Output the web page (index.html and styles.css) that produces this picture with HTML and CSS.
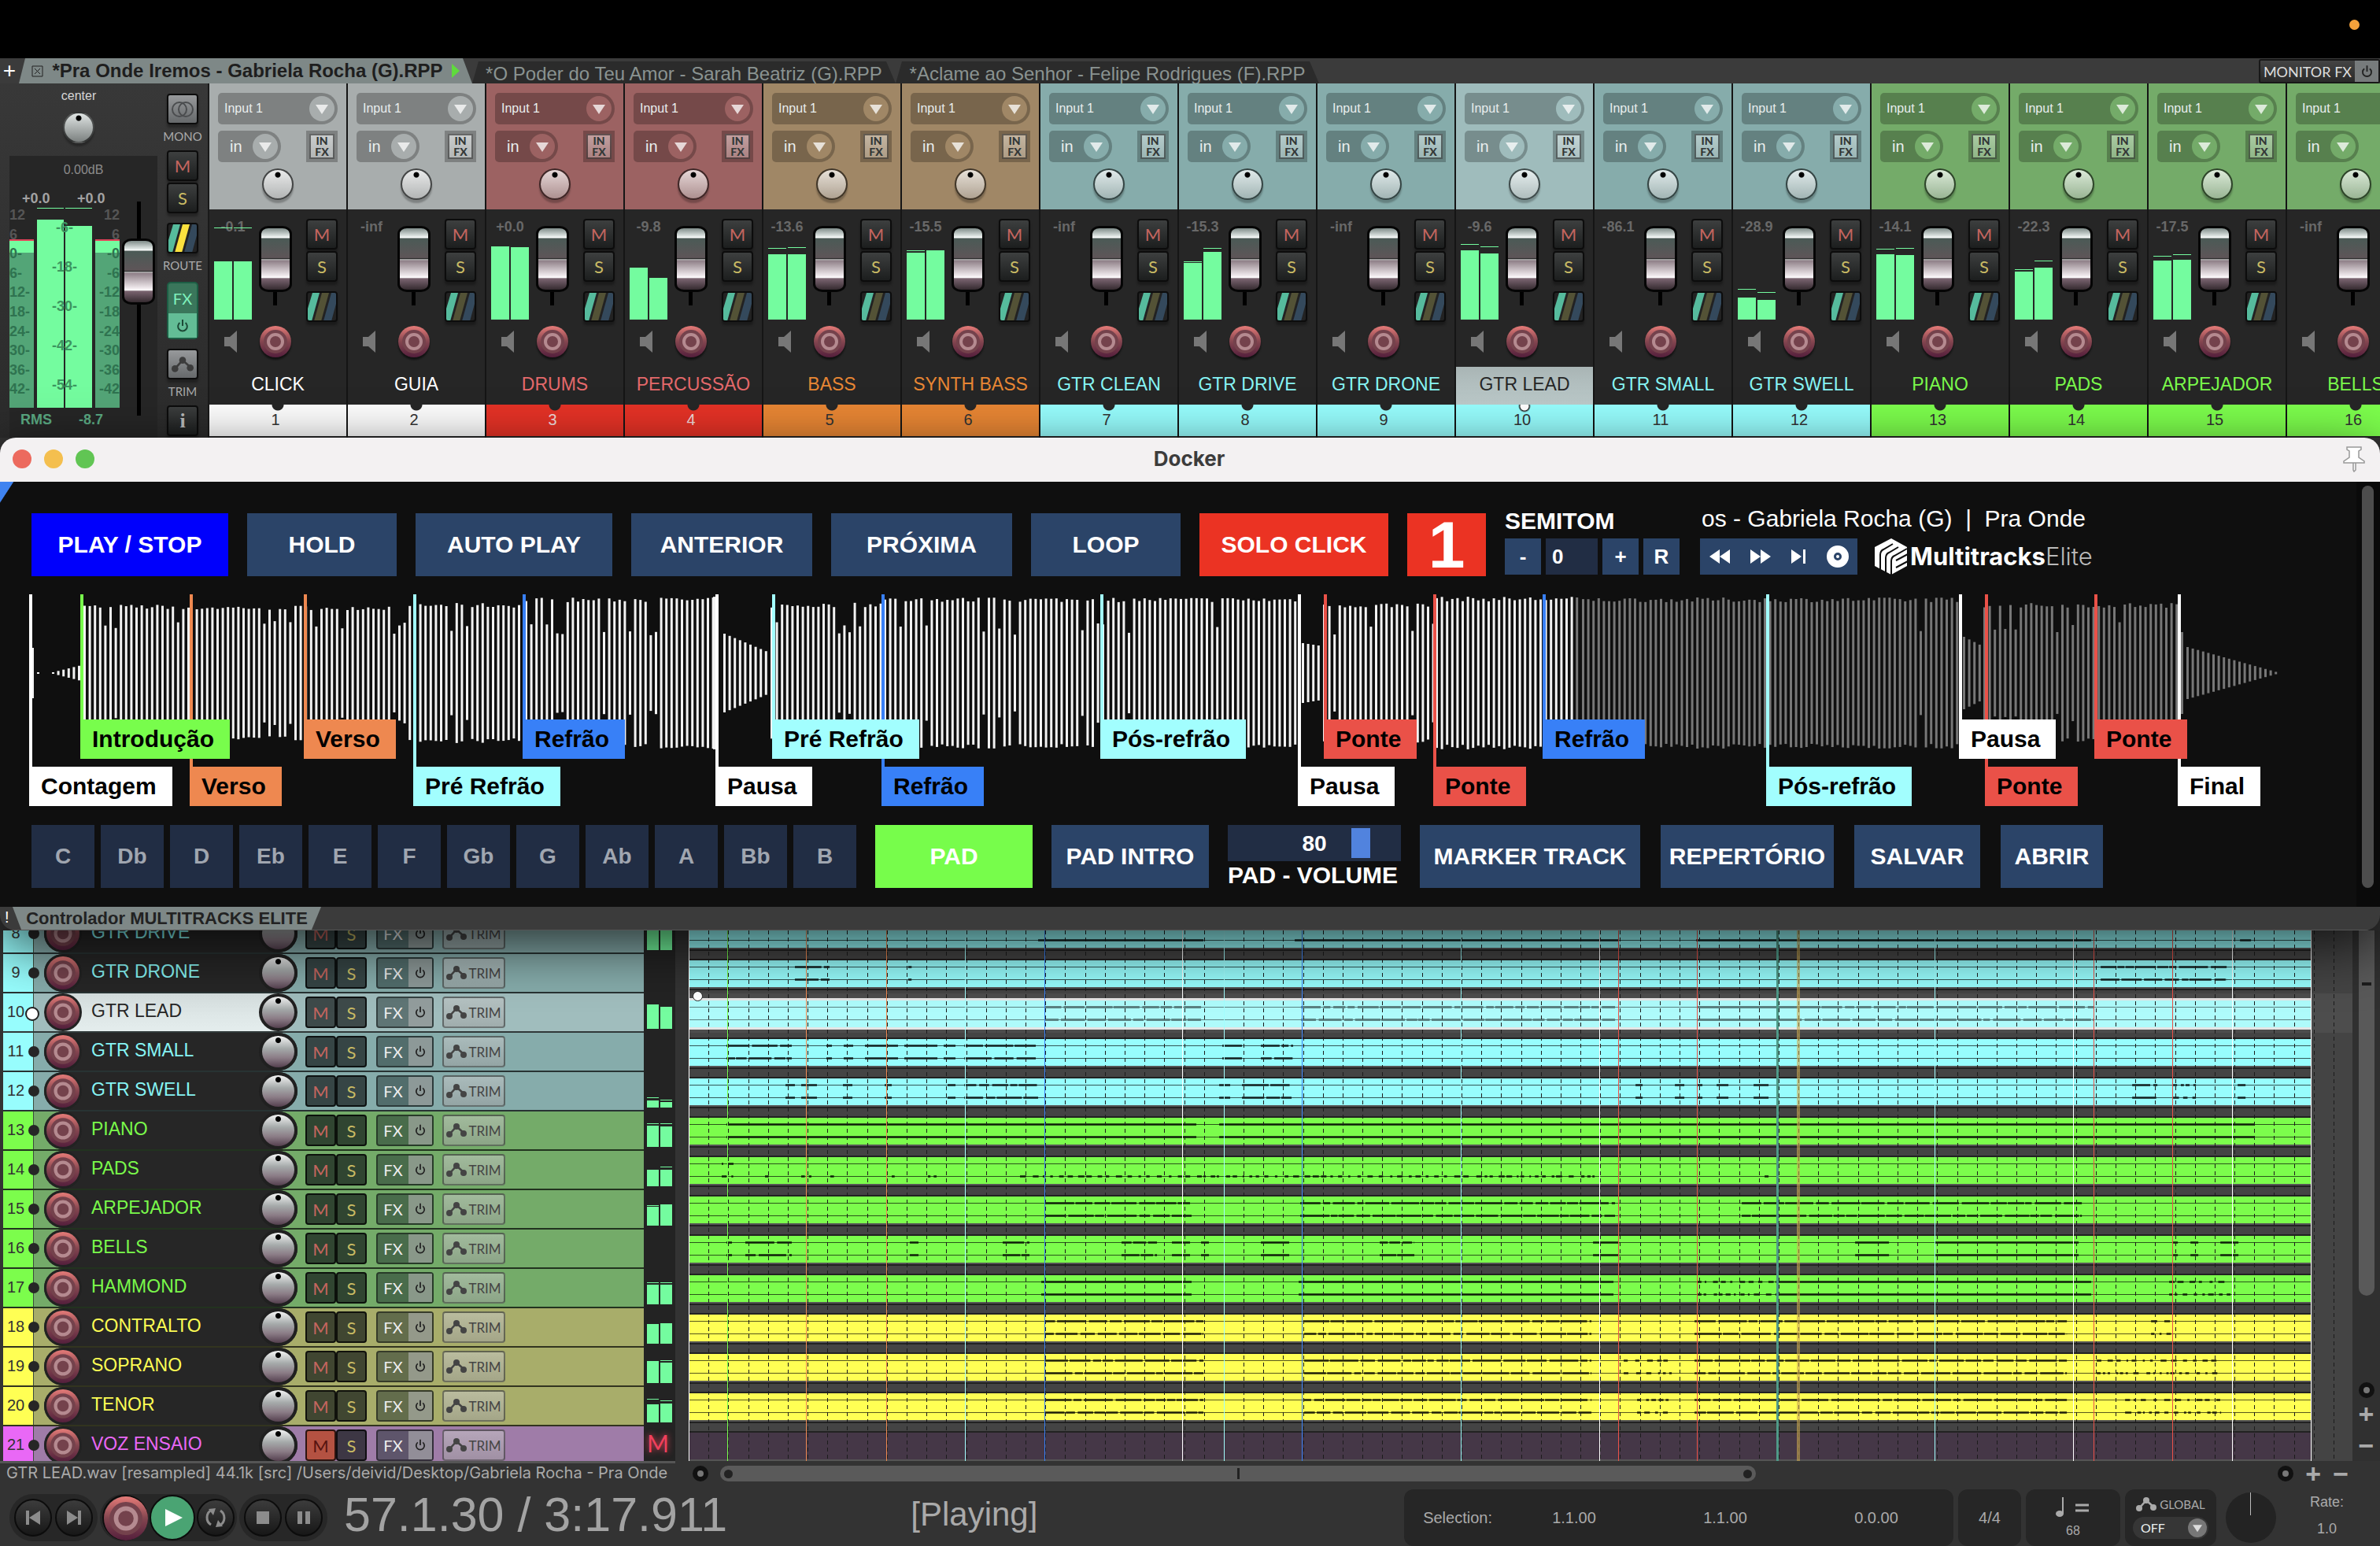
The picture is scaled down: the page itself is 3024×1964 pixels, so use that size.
FILE: index.html
```html
<!DOCTYPE html>
<html lang="pt-BR">
<head>
  <meta charset="UTF-8">
  <title>Pra Onde Iremos - Gabriela Rocha (G).RPP</title>
  <link rel="stylesheet" href="styles.css">
</head>
<body>
  <!-- shared icons -->
  <svg class="defs" aria-hidden="true">
    <symbol id="i-down" viewBox="0 0 32 32"><circle cx="16" cy="16" r="16" fill="var(--soft)"/><path d="M8 11h16l-8 12z" fill="#fff" opacity=".75"/></symbol>
    <symbol id="i-power" viewBox="0 0 20 20"><path d="M6 5.5a6.5 6.5 0 1 0 8 0M10 1v9" fill="none" stroke="currentColor" stroke-width="2.2"/></symbol>
    <symbol id="i-env" viewBox="0 0 26 20"><path d="M4 15 13 5l9 8" fill="none" stroke="currentColor" stroke-width="2.5"/><circle cx="4" cy="15" r="4" fill="currentColor"/><circle cx="13" cy="5" r="4" fill="currentColor"/><circle cx="22" cy="14" r="4" fill="currentColor"/></symbol>
    <symbol id="i-route" viewBox="0 0 36 36"><path d="M6 0h9L5 36H0V20z" fill="#56bb9d"/><path d="M18 0h9L17 36H8z" fill="var(--mid)"/><path d="M30 0h6v14l-6 22H20z" fill="#34495c"/></symbol>
    <symbol id="i-spk" viewBox="0 0 16 28"><path d="M0 8h7l9-8v28l-9-8H0z" fill="#777"/></symbol>
    <symbol id="i-rec" viewBox="0 0 40 40">
      <circle cx="20" cy="20" r="20" fill="url(#recg)"/><circle cx="20" cy="20" r="15" fill="#74424c"/><circle cx="20" cy="20" r="9" fill="none" stroke="#b58a90" stroke-width="4"/>
    </symbol>
    <linearGradient id="recg" x1="0" y1="0" x2="0" y2="1"><stop offset="0" stop-color="#e67b78"/><stop offset=".5" stop-color="#83454f"/><stop offset="1" stop-color="#541f3c"/></linearGradient>
  </svg>

  <header class="menubar"><span class="mic-dot"></span></header>

  <nav class="tabs">
    <button class="tab-add" aria-label="New tab">+</button>
    <button class="tab active">
      <svg width="15" height="15" viewBox="0 0 15 15"><path d="M1 1h13v13H1zM4 4l7 7M11 4l-7 7" fill="none" stroke="#222"/></svg>
      <span>*Pra Onde Iremos - Gabriela Rocha (G).RPP</span>
      <svg width="10" height="18" viewBox="0 0 10 18"><path d="M0 0v18l10-9z" fill="#5fdb3c"/></svg>
    </button>
    <button class="tab">*O Poder do Teu Amor - Sarah Beatriz (G).RPP</button>
    <button class="tab">*Aclame ao Senhor - Felipe Rodrigues (F).RPP</button>
    <button class="monitor-fx"><span>MONITOR FX</span><i><svg width="17" height="20"><use href="#i-power"/></svg></i></button>
  </nav>

  <section class="mixer">
    <div class="master">
      <div class="master-left">
        <div class="pan-label">center</div>
        <span class="knob"></span>
        <div class="master-box">
          <div class="master-db">0.00dB</div>
          <div class="master-meter" id="masterMeter"></div>
          <input class="fader master-fader" type="range" min="0" max="100" value="75" aria-label="Master volume">
        </div>
      </div>
      <div class="master-btns">
        <button class="sq light" aria-label="Mono"><svg width="30" height="22" viewBox="0 0 30 22"><circle cx="11" cy="11" r="9" fill="none" stroke="#4b4d4f" stroke-width="2"/><circle cx="19" cy="11" r="9" fill="none" stroke="#4b4d4f" stroke-width="2"/></svg></button>
        <span class="cap">MONO</span>
        <button class="sq mute">M</button>
        <button class="sq solo">S</button>
        <button class="sq route on" aria-label="Route"><svg width="36" height="36"><use href="#i-route"/></svg></button>
        <span class="cap">ROUTE</span>
        <button class="master-fx"><span>FX</span><i><svg width="18" height="20"><use href="#i-power"/></svg></i></button>
        <button class="sq light" aria-label="Trim"><svg width="28" height="22"><use href="#i-env"/></svg></button>
        <span class="cap">TRIM</span>
        <button class="sq info">i</button>
      </div>
    </div>
    <div class="strips" id="strips"></div>
  </section>

  <section class="docker">
    <div class="titlebar">
      <div class="lights"><button class="close" aria-label="Close"></button><button class="min" aria-label="Minimize"></button><button class="max" aria-label="Zoom"></button></div>
      <h1>Docker</h1>
      <svg class="pin" width="30" height="34" viewBox="0 0 30 34"><path d="M6 2h18v3l-3 2v8l7 5v2H2v-2l7-5V7L6 5zM14 22h3v9l-2 2-1-2z" fill="#fff" stroke="#999" stroke-width="1.5"/></svg>
    </div>
    <div class="docker-body">
      <div class="docker-main">
        <div class="row top-row">
          <button class="btn w250 blue">PLAY / STOP</button>
          <button class="btn w190">HOLD</button>
          <button class="btn w250">AUTO PLAY</button>
          <button class="btn w230">ANTERIOR</button>
          <button class="btn w230">PRÓXIMA</button>
          <button class="btn w190">LOOP</button>
          <button class="btn w240 red">SOLO CLICK</button>
          <button class="btn w100 red big">1</button>
          <div class="semitom">
            <label for="semi">SEMITOM</label>
            <div class="semi-row">
              <button class="btn small">-</button>
              <input id="semi" type="text" value="0">
              <button class="btn small">+</button>
              <button class="btn small">R</button>
            </div>
          </div>
          <div class="now">
            <div class="marquee"><span>os - Gabriela Rocha (G)  |  Pra Onde</span></div>
            <div class="now-row">
              <div class="mini-transport">
                <button aria-label="Rewind"><svg width="26" height="18" viewBox="0 0 26 18"><path d="M13 0v18L0 9zM26 0v18L13 9z" fill="#fff"/></svg></button>
                <button aria-label="Forward"><svg width="26" height="18" viewBox="0 0 26 18"><path d="M0 0v18l13-9zM13 0v18l13-9z" fill="#fff"/></svg></button>
                <button aria-label="Next"><svg width="18" height="18" viewBox="0 0 18 18"><path d="M0 0v18l13-9zM15 0h3v18h-3z" fill="#fff"/></svg></button>
                <button aria-label="Disc"><svg width="30" height="30" viewBox="0 0 30 30"><circle cx="15" cy="15" r="9.5" fill="none" stroke="#fff" stroke-width="9"/><circle cx="15" cy="15" r="2" fill="#fff"/></svg></button>
              </div>
              <div class="logo">
                <svg width="42" height="46" viewBox="0 0 42 46"><path d="M21 0 41 11v24L21 46 0 35V11z" fill="#fff"/><path d="M7 39V21q0-5 4-7l12-7M14 43V25q0-5 4-7l12-7M21 46V29q0-5 4-7l16-9M27 28l15-8M27 37l15-8" fill="none" stroke="#0f0f0f" stroke-width="2"/></svg>
                <span><b>Multitracks</b>Elite</span>
              </div>
            </div>
          </div>
        </div>

        <div class="song" id="song"></div>

        <div class="row keys-row">
          <div class="keys" id="keys"></div>
          <button class="btn w200 green">PAD</button>
          <button class="btn w200">PAD INTRO</button>
          <div class="pad-vol">
            <div class="vol-box"><input id="padvol" type="range" min="0" max="100" value="80"><output for="padvol">80</output></div>
            <label for="padvol">PAD - VOLUME</label>
          </div>
          <div class="files">
            <button class="btn w280">MARKER TRACK</button>
            <button class="btn w220">REPERTÓRIO</button>
            <button class="btn w160">SALVAR</button>
            <button class="btn w130">ABRIR</button>
          </div>
        </div>
      </div>
      <div class="vscroll"><span></span></div>
    </div>
    <div class="dock-tabs"><span class="bang">!</span><button class="dock-tab">Controlador MULTITRACKS ELITE</button></div>
  </section>

  <main class="arrange">
    <div class="tcp" id="tcp"></div>
    <div class="timeline">
      <div id="lanes"></div>
      <svg class="grid" id="grid"></svg>
      <span class="handle"></span>
    </div>
    <div class="arr-scroll"><span class="thumb"></span><span class="round"></span><b>+</b><b>−</b></div>
  </main>

  <div class="status">
    <div class="file-info">GTR LEAD.wav [resampled] 44.1k [src] /Users/deivid/Desktop/Gabriela Rocha - Pra Onde</div>
    <div class="hscroll">
      <span class="round"></span>
      <div class="htrack"><span class="hthumb"><i></i><u></u><i></i></span></div>
      <span class="round"></span><b>+</b><b>−</b>
    </div>
  </div>

  <footer class="transport">
    <div class="tgroup">
      <button class="tb" aria-label="Start"><svg width="18" height="18" viewBox="0 0 18 18"><path d="M0 0h4v18H0zM18 0v18L4 9z"/></svg></button>
      <button class="tb" aria-label="End"><svg width="18" height="18" viewBox="0 0 18 18"><path d="M14 0h4v18h-4zM0 0v18l14-9z"/></svg></button>
    </div>
    <div class="tgroup tight">
      <button class="tb rec" aria-label="Record"><svg width="56" height="56" viewBox="0 0 40 40"><use href="#i-rec"/></svg></button>
      <button class="tb play" aria-label="Play"><svg width="22" height="22" viewBox="0 0 22 22"><path d="M0 0v22l22-11z" fill="#fff"/></svg></button>
      <button class="tb" aria-label="Loop"><svg width="28" height="28" viewBox="0 0 28 28"><path d="M9 4a11 11 0 0 0-1 19M19 24a11 11 0 0 0 1-19" fill="none" stroke="#8c8c8c" stroke-width="3"/><path d="M5 3l9-1-3 9zM23 25l-9 1 3-9z"/></svg></button>
    </div>
    <div class="tgroup">
      <button class="tb" aria-label="Stop"><svg width="16" height="16" viewBox="0 0 16 16"><path d="M0 0h16v16H0z"/></svg></button>
      <button class="tb" aria-label="Pause"><svg width="16" height="16" viewBox="0 0 16 16"><path d="M0 0h6v16H0zM10 0h6v16h-6z"/></svg></button>
    </div>
    <div class="clock">57.1.30 / 3:17.911</div>
    <div class="state">[Playing]</div>
    <div class="panel sel"><span>Selection:</span><span>1.1.00</span><span>1.1.00</span><span>0.0.00</span></div>
    <div class="panel sig">4/4</div>
    <div class="panel tempo">
      <svg width="44" height="26" viewBox="0 0 44 26"><ellipse cx="5" cy="21" rx="5" ry="4" fill="#aaa"/><path d="M9 0v21" stroke="#aaa" stroke-width="2"/><path d="M25 10h17M25 17h17" stroke="#aaa" stroke-width="3"/></svg>
      <span>68</span>
    </div>
    <div class="panel global">
      <div><svg width="26" height="20"><use href="#i-env"/></svg>GLOBAL</div>
      <label class="pill"><select aria-label="Global automation"><option>OFF</option></select><svg width="24" height="24"><use href="#i-down"/></svg></label>
    </div>
    <div class="rate-knob"></div>
    <div class="rate"><span>Rate:</span><span>1.0</span></div>
  </footer>

  <script src="script.js"></script>
</body>
</html>
```
FILE: styles.css
```css
* {
  box-sizing: border-box;
}
body {
  margin: 0;
  min-height: 100vh;
  display: flex;
  flex-direction: column;
  overflow: hidden;
  background: #333;
  color: #aaa;
  font-family: "Liberation Sans", Arial, sans-serif;
  font-size: 20px;
}
button, input, select {
  font: inherit;
  color: inherit;
  border: 0;
  margin: 0;
  padding: 0;
  background: none;
}
svg {
  display: block;
}
.defs {
  position: absolute;
  width: 0;
  height: 0;
}

/* top */
.menubar {
  height: 74px;
  background: #000;
  display: flex;
  justify-content: flex-end;
  padding: 25px 26px 0 0;
}
.mic-dot {
  width: 13px;
  height: 13px;
  border-radius: 50%;
  background: #f5a23b;
}
.tabs {
  height: 32px;
  background: #3b3b3b;
  display: flex;
  align-items: flex-end;
  font-size: 24px;
}
.tab-add {
  width: 24px;
  height: 32px;
  color: #fff;
  font-size: 28px;
  line-height: 26px;
}
.tab {
  height: 28px;
  line-height: 32px;
  width: 538px;
  background: #2b2b2b;
  color: #8a9391;
  clip-path: polygon(8px 0, calc(100% - 12px) 0, 100% 100%, 0 100%);
  white-space: nowrap;
}
.tab.active {
  width: 576px;
  height: 32px;
  line-height: 30px;
  background: #7e8887;
  color: #1e1e1e;
  font-weight: bold;
  display: flex;
  align-items: center;
  justify-content: center;
  gap: 11px;
}
.monitor-fx {
  margin-left: auto;
  height: 31px;
  display: flex;
  align-items: center;
  background: linear-gradient(#444, #2a2a2a);
  border: 2px solid #181818;
  border-radius: 3px;
  color: #ddd;
  font-family: Lato, sans-serif;
  font-size: 18px;
}
.monitor-fx span {
  padding: 0 4px;
}
.monitor-fx i {
  width: 30px;
  height: 27px;
  background: #777b7c;
  color: #222;
  display: grid;
  place-items: center;
}

/* mixer */
.mixer {
  height: 450px;
  display: flex;
  overflow: hidden;
  background: #262626;
}
.master {
  flex: 0 0 266px;
  display: flex;
  background: linear-gradient(#383838, #303030 60%, #2b2b2b);
  border-right: 2px solid #1a1a1a;
}
.master-left {
  width: 200px;
  padding: 6px 0 0 12px;
  display: flex;
  flex-direction: column;
}
.pan-label {
  height: 20px;
  margin-bottom: 10px;
  padding-right: 12px;
  font-size: 16px;
  line-height: 20px;
  color: #d6d6d6;
  text-align: center;
}
.knob {
  display: block;
  flex: none;
  width: 40px;
  height: 40px;
  border-radius: 50%;
  border: 2px solid rgba(0,0,0,.6);
  background: radial-gradient(circle at 50% 17%, #000 3px, transparent 4px), linear-gradient(rgba(255,255,255,.75), rgba(190,190,190,.5));
  background-clip: padding-box;
  box-shadow: 0 4px 2px rgba(0,0,0,.25);
}
.master-left .knob {
  margin: 0 0 16px 68px;
  background: radial-gradient(circle at 50% 17%, #000 3px, transparent 4px), linear-gradient(#e0e5e4, #7c8180);
}
.master-box {
  flex: 1;
  background: #262626;
  display: grid;
  grid-template: 37px 1fr / 140px 1fr;
}
.master-db {
  grid-column: 1 / 3;
  text-align: center;
  font-size: 16px;
  line-height: 36px;
  color: #8b8b8b;
}
.master-meter {
  position: relative;
  font-size: 18px;
  font-weight: bold;
  color: #555;
}
/* meter scale is drawn over the bars */
.master-meter span {
  position: absolute;
  line-height: 18px;
}
.master-meter .ml { left: 0; }
.master-meter .mr { right: 0; }
.master-meter .mc { left: 0; width: 100%; text-align: center; color: #3c9460; }
.master-meter .on { color: #2f7350; }
.master-meter .bar {
  bottom: 38px;
  width: 34px;
  background: #74fc9f;
}
.master-meter .side {
  width: 31px;
  height: 214px;
  border-top: 2px solid #e3445a;
  background: linear-gradient(#74fc9f 15px, #53a577 15px);
}
.master-meter .peak { color: #a2a2a2; }
.master-meter .rms { color: #5aa982; }
.fader {
  appearance: none;
  writing-mode: vertical-lr;
  direction: rtl;
  width: 42px;
  height: 101px;
  background: linear-gradient(#000, #000) center / 5px 100% no-repeat;
}
.fader::-webkit-slider-thumb {
  appearance: none;
  width: 42px;
  height: 84px;
  border: 3px solid #050505;
  border-radius: 12px / 10px;
  background: linear-gradient(#7f8c89, #e9efed 14%, #fff 15%, #4b5a56 17%, #5e5558 48%, #111 49%, #bbb 51%, #8f8088 53%, #f4eef1 78%, #fff 80%, #7a6470 82%, #352b30);
}
.master-fader {
  height: 272px;
  margin: 21px 0 0 3px;
}
.master-btns {
  flex: 1;
  display: flex;
  flex-direction: column;
  align-items: center;
  padding-top: 13px;
}
.sq {
  --mid: #535236;
  flex: none;
  width: 40px;
  height: 39px;
  border: 2px solid #0c0c0c;
  border-radius: 4px;
  background: linear-gradient(#3d3f3f, #1c1e1e);
  display: grid;
  place-items: center;
  overflow: hidden;
  font-family: Lato, sans-serif;
  font-size: 22px;
  line-height: 32px;
  box-shadow: 0 4px 3px rgba(0,0,0,.3);
}
.sq + .sq {
  margin-top: 2px;
}
.mute { color: #c4655f; }
.solo { color: #c9bb64; }
.sq.light { background: linear-gradient(#97999b, #66696b); color: #3c3c3c; }
.sq.route { margin-top: 12px; background: #222; }
.sq.route.on { --mid: #fbe13e; }
.sq.info { font-family: "Liberation Serif", serif; font-weight: bold; font-size: 26px; color: #bbb; }
.cap {
  height: 33px;
  line-height: 31px;
  font-family: Lato, sans-serif;
  font-size: 15px;
  color: #aaa;
}
.sq.route + .cap { height: 36px; }
.master-fx {
  width: 40px;
  height: 73px;
  margin-bottom: 12px;
  border: 2px solid #1d5e45;
  border-radius: 5px;
  background: #3a765b;
  color: #7ff0bb;
  font-family: Lato, sans-serif;
  display: grid;
  grid-template-rows: 38px 1fr;
}
.master-fx span { line-height: 38px; }
.master-fx i {
  background: #63bd96;
  color: #1c4936;
  display: grid;
  place-items: center;
}

.strips {
  flex: 1;
  display: flex;
  overflow: hidden;
}
.strip {
  flex: 0 0 176px;
  border-right: 2px solid #151515;
}
.strip-io {
  height: 160px;
  padding: 12px 11px 0;
  background: var(--soft);
}
.strip.selected { --soft: #9fbcbc; }
.pill {
  position: relative;
  display: flex;
  align-items: center;
  justify-content: space-between;
  height: 40px;
  padding: 0 4px 0 8px;
  border-radius: 5px 20px 20px 5px;
  background: rgba(0,0,0,.25);
  color: #e9eeee;
  font-size: 16px;
}
.pill select {
  appearance: none;
  flex: 1;
  min-width: 0;
  line-height: 30px;
}
.io-row {
  display: flex;
  justify-content: space-between;
  margin: 8px 0;
}
.io-row .pill {
  width: 80px;
  padding-left: 15px;
  font-size: 20px;
}
.infx {
  width: 40px;
  height: 40px;
  border: 4px solid rgba(0,0,0,.25);
  background: linear-gradient(rgba(255,255,255,.4), rgba(200,200,200,.3));
  background-clip: padding-box;
  box-shadow: inset 0 0 0 2px rgba(0,0,0,.5);
  color: #333737;
  font: 900 14px/14px Lato, sans-serif;
}
.strip-io .knob {
  margin: 0 auto;
}
.strip-mid {
  height: 200px;
  display: grid;
  grid-template-columns: 48px 1fr 40px;
  padding: 12px 11px 0 6px;
}
.strip-meter {
  display: flex;
  flex-direction: column;
}
.db {
  height: 20px;
  line-height: 20px;
  font-size: 18px;
  font-weight: bold;
  color: #686868;
  text-align: center;
}
.bars {
  position: relative;
  height: 108px;
  display: flex;
  align-items: flex-end;
  gap: 2px;
  margin-bottom: 14px;
}
.bars i {
  flex: 1;
  background: #74fc9f;
}
/* peak hold line floats over the bar */
.bars u {
  position: absolute;
  height: 1px;
  width: 23px;
  background: #74fc9f;
}
.bars u + u { right: 0; }
.strip-meter svg { margin-left: 13px; }
.strip-fader {
  display: flex;
  flex-direction: column;
  align-items: center;
  padding: 9px 10px 0 0;
}
.strip-fader .fader { margin-bottom: 26px; }
.recbtn { filter: drop-shadow(0 3px 1px #111); }
.strip-name {
  height: 48px;
  line-height: 44px;
  text-align: center;
  font-size: 23px;
  white-space: nowrap;
  color: var(--text);
}
.selected .strip-name { background: linear-gradient(#a9b5b5, #bccaca); color: #262626; }
.strip-num {
  height: 40px;
  line-height: 38px;
  padding-right: 6px;
  text-align: center;
  background: radial-gradient(circle at 50% 0, #262626 7px, transparent 8px), var(--hot);
  color: var(--num, #333);
}
.selected .strip-num { background: radial-gradient(circle at 50% 2px, #fff 5px, #222 6px, transparent 8px), var(--hot); }

/* docker window */
.docker {
  position: relative;
  z-index: 2;
  background: #3b3b3b;
  border-radius: 20px;
  overflow: hidden;
  flex: none;
  box-shadow: 0 20px 70px rgba(0,0,0,.7);
}
.titlebar {
  height: 56px;
  display: grid;
  grid-template-columns: 1fr auto 1fr;
  align-items: center;
  padding: 0 18px 2px 16px;
  background: #f3f1f2;
}
.titlebar h1 {
  margin: 0;
  font: bold 26px/30px Inter, sans-serif;
  color: #3c3c3c;
}
.lights { display: flex; gap: 16px; }
.lights button { width: 24px; height: 24px; border-radius: 50%; }
.close { background: #ec6a5e; }
.min { background: #f4bf4f; }
.max { background: #61c554; }
.pin { justify-self: end; }
.docker-body {
  display: flex;
  background: linear-gradient(123deg, #3f83f0 14px, transparent 15px), #0f0f0f;
}
.docker-main {
  flex: 1;
  min-width: 0;
  padding: 40px 0 24px;
  color: #fff;
  font-size: 30px;
}
.row {
  display: flex;
  gap: 24px;
  height: 80px;
  padding-left: 40px;
}
.btn {
  background: #2b4468;
  font-weight: bold;
  white-space: nowrap;
}
.btn.blue { background: #0000fc; }
.btn.red { background: #eb3323; }
.btn.green { background: #77fd4b; }
.btn.big { font-size: 84px; line-height: 78px; }
.w100 { width: 100px; }
.w130 { width: 130px; }
.w160 { width: 160px; }
.w190 { width: 190px; }
.w200 { width: 200px; }
.w220 { width: 220px; }
.w230 { width: 230px; }
.w240 { width: 240px; }
.w250 { width: 250px; }
.w280 { width: 280px; }
.semitom {
  width: 224px;
  font-weight: bold;
  line-height: 20px;
}
.semitom label { display: block; height: 32px; }
.semi-row { display: flex; gap: 6px; font-size: 26px; }
.semi-row .btn { width: 46px; height: 46px; }
.semi-row input { width: 66px; height: 46px; padding-left: 8px; background: #212d44; }
.now { width: 520px; }
.marquee {
  display: flex;
  justify-content: flex-end;
  width: 490px;
  height: 38px;
  margin: -10px 0 4px;
  overflow: hidden;
  white-space: pre;
  line-height: 34px;
}
.now-row { display: flex; gap: 22px; }
.mini-transport {
  display: flex;
  align-items: center;
  justify-content: space-between;
  width: 200px;
  height: 46px;
  padding: 0 10px 0 12px;
  background: #2b4468;
}
.logo {
  display: flex;
  align-items: center;
  gap: 3px;
  font: 300 31px/40px Inter, sans-serif;
  color: #bbb;
}
.logo b { color: #fff; font-weight: 700; }

.song {
  position: relative;
  height: 269px;
  margin: 23px 0 24px;
}
.song svg { width: 100%; height: 200px; }
/* song markers sit on top of the waveform */
.mark {
  position: absolute;
  top: 0;
  border-left: 4px solid var(--c);
  padding-top: 159px;
}
.mark.low { padding-top: 219px; z-index: 0; }
.mark.up { z-index: 1; }
.mark a {
  display: block;
  margin-left: -4px;
  padding: 0 20px 0 15px;
  background: var(--c);
  color: #000;
  font-weight: bold;
  line-height: 50px;
  text-decoration: none;
}
.keys { display: flex; gap: 8px; }
.keys .btn { width: 80px; background: #212d44; color: #a0a6b0; font-size: 28px; }
.files { display: flex; gap: 26px; }
.pad-vol { width: 220px; font-weight: bold; white-space: nowrap; }
.pad-vol label { display: block; line-height: 36px; }
.vol-box { position: relative; height: 46px; background: #212d44; }
.vol-box output {
  position: absolute;
  inset: 0;
  text-align: center;
  line-height: 48px;
  font-size: 28px;
}
.vol-box input {
  display: block;
  appearance: none;
  width: 100%;
  height: 46px;
}
.vol-box input::-webkit-slider-thumb {
  appearance: none;
  width: 24px;
  height: 38px;
  background: #5183de;
}
.vscroll {
  width: 30px;
  padding: 5px 8px 24px 7px;
  background: #0a0a0a;
}
.vscroll span { display: block; height: 100%; border-radius: 8px; background: #4d4d4d; }
.dock-tabs {
  height: 30px;
  display: flex;
  border-bottom: 1px solid #555;
}
.bang { width: 16px; padding-left: 6px; line-height: 26px; color: #fff; }
.dock-tab {
  width: 392px;
  background: #7e8887;
  color: #222;
  font-weight: bold;
  font-size: 22px;
  line-height: 28px;
  clip-path: polygon(0 0, 100% 0, calc(100% - 12px) 100%, 11px 100%);
}

/* arrange view */
.arrange {
  flex: 1 1 0;
  min-height: 0;
  display: flex;
  overflow: hidden;
}
.tcp {
  width: 858px;
  margin: -20px 17px 0 0;
  padding-left: 4px;
}
.track {
  height: 50px;
  display: flex;
  align-items: center;
  border-bottom: 2px solid rgba(0,0,0,.7);
  background: var(--soft);
}
.track.selected { background: #a0bdbd; }
.t-num {
  position: relative;
  width: 39px;
  height: 48px;
  line-height: 46px;
  padding-right: 6px;
  text-align: center;
  background: var(--hot);
  color: #333;
  border-right: 1px solid #3a4a3a;
}
.t-num::after {
  content: "";
  position: absolute;
  right: -8px;
  top: 17px;
  width: 14px;
  height: 14px;
  border-radius: 50%;
  background: #262626;
}
.selected .t-num::after { background: #fff; border: 2px solid #222; }
.t-name {
  display: flex;
  align-items: center;
  width: 322px;
  height: 48px;
  margin-left: 13px;
  border-radius: 24px;
  background: #262626;
  color: var(--text);
  font-size: 23px;
  line-height: 44px;
}
.t-name > span:first-of-type { padding-bottom: 4px; }
.selected .t-name { background: linear-gradient(#d6dfdf, #e4eded); color: #262626; }
.t-rec {
  width: 48px;
  height: 48px;
  border-radius: 50%;
  background: #222;
  display: grid;
  place-items: center;
  margin-right: 12px;
}
.t-knob {
  width: 49px;
  height: 48px;
  margin-left: auto;
  border: 4px solid #202020;
  border-radius: 50%;
  background: radial-gradient(circle at 50% 14%, #000 3px, transparent 4px), linear-gradient(#f4f4f4, #a5aaaa 40%, #8b7c86 70%, #55404f);
}
.t-ms {
  display: flex;
  margin: 0 12px 0 10px;
}
.t-ms button {
  width: 39px;
  height: 40px;
  border: 2px solid rgba(0,0,0,.75);
  border-radius: 4px;
  background: rgba(20,25,25,.7);
  font-family: Lato, sans-serif;
  font-size: 22px;
}
.t-ms .muted { background: #b45242; color: #561410; }
.t-fx {
  display: flex;
  width: 73px;
  height: 40px;
  margin-right: 11px;
  border: 2px solid rgba(0,0,0,.45);
  border-radius: 4px;
  background: rgba(30,45,45,.5);
  color: #eee;
  font-family: Lato, sans-serif;
}
.t-fx span { width: 39px; line-height: 36px; }
.t-fx i {
  flex: 1;
  display: grid;
  place-items: center;
  background: rgba(190,190,190,.55);
  color: #222;
}
.t-trim {
  display: flex;
  align-items: center;
  justify-content: center;
  gap: 2px;
  width: 80px;
  height: 40px;
  border: 2px solid rgba(0,0,0,.4);
  border-radius: 4px;
  background: linear-gradient(rgba(200,200,200,.55), rgba(160,160,160,.55));
  color: #444;
  font-family: Lato, sans-serif;
  font-size: 17px;
}
.t-meter {
  width: 40px;
  height: 50px;
  margin-left: auto;
  padding: 0 4px 4px;
  background: #232323;
}
.t-meter .bars { height: 46px; margin: 0; }
.t-meter .bars u { width: 15px; }
.t-meter em {
  display: block;
  font: 30px/44px Lato, sans-serif;
  color: #f0405c;
  text-shadow: 0 0 8px #f0405c;
}
.timeline {
  position: relative;
  flex: 1;
  background: #444;
}
#lanes { margin-top: -20px; }
.lane {
  height: 50px;
  padding-top: 6px;
}
.lane.selected { background: #4d4d4d; }
.item {
  width: 97.5%;
  height: 40px;
  border-top: 2px solid #222;
  border-bottom: 2px solid #222;
  background: #555;
}
.item svg {
  width: 100%;
  height: 34px;
  background: var(--hot);
}
.item rect { fill: rgba(0,0,0,.66); }
.selected .item { border-width: 3px; border-color: #e4e4e4; }
.selected .item svg { background: #aefbfb; }
.selected .item rect { fill: #5a8282; }
/* grid, markers and cursors run over all lanes */
.grid {
  position: absolute;
  inset: 0;
  width: 100%;
  height: 100%;
  shape-rendering: crispEdges;
}
.handle {
  position: absolute;
  left: 5px;
  top: 77px;
  width: 13px;
  height: 13px;
  border-radius: 50%;
  border: 1px solid #222;
  background: #fff;
}
.arr-scroll {
  width: 35px;
  display: flex;
  flex-direction: column;
  align-items: center;
  background: #303030;
  font: bold 34px/40px "Liberation Sans", sans-serif;
}
.arr-scroll .thumb {
  width: 20px;
  height: 466px;
  margin-bottom: 110px;
  border-radius: 0 0 10px 10px;
  background: linear-gradient(#1c1c1c, #1c1c1c) 50% 66px / 12px 4px no-repeat, #595959;
}
.round {
  width: 20px;
  height: 20px;
  border-radius: 50%;
  border: 6px solid #111;
  background: #777;
}

.status {
  height: 32px;
  display: flex;
  align-items: center;
}
.file-info {
  width: 858px;
  padding: 0 0 5px 8px;
  border-top: 3px solid #555;
  overflow: hidden;
  white-space: nowrap;
  font-family: Inter, sans-serif;
  line-height: 24px;
}
.hscroll {
  flex: 1;
  display: flex;
  align-items: center;
  gap: 15px;
  padding: 0 40px 0 22px;
  font: bold 34px/20px "Liberation Sans", sans-serif;
}
.htrack { flex: 1; }
.hthumb {
  width: 67%;
  height: 20px;
  display: flex;
  align-items: center;
  justify-content: space-between;
  padding: 0 5px;
  border-radius: 10px;
  background: #5a5a5a;
}
.hthumb i { width: 11px; height: 11px; border-radius: 50%; background: #222; }
.hthumb u { width: 3px; height: 14px; background: #222; }

.transport {
  height: 76px;
  display: flex;
  align-items: center;
  gap: 3px;
  padding: 4px 46px 0 12px;
}
.tgroup {
  display: flex;
  gap: 4px;
  padding: 4px 6px;
  height: 60px;
  align-items: center;
  border-radius: 30px;
  background: #272727;
}
.tgroup.tight { gap: 2px; padding: 4px 3px; }
.tb {
  width: 48px;
  height: 48px;
  border-radius: 50%;
  border: 2px solid #0c0c0c;
  background: linear-gradient(#3c3c3c, #171717);
  display: grid;
  place-items: center;
  fill: #8c8c8c;
}
.tb.rec, .tb.play { width: 58px; height: 58px; }
.tb.play { background: #4aa473; padding-left: 4px; }
.clock {
  margin-left: 18px;
  font-size: 61px;
  line-height: 60px;
  padding-bottom: 8px;
  white-space: nowrap;
  color: #a3a3a3;
}
.state {
  flex: 1;
  padding: 0 0 8px 230px;
  font-size: 42px;
}
.panel {
  height: 72px;
  margin-left: 3px;
  border-radius: 12px;
  background: #262626;
  display: flex;
  flex-direction: column;
  align-items: center;
  justify-content: center;
}
.sel {
  width: 698px;
  display: grid;
  grid-template-columns: 118px 192px 192px 192px;
  text-align: center;
}
.sel span:first-child { text-align: right; margin-right: 8px; }
.sig { width: 80px; }
.tempo { width: 120px; gap: 8px; font-size: 16px; }
.global {
  --soft: #777;
  width: 116px;
  gap: 6px;
  font-family: Lato, sans-serif;
  font-size: 15px;
}
.global div { display: flex; gap: 4px; align-items: center; }
.global .pill {
  width: 96px;
  height: 28px;
  padding: 0 2px 0 10px;
  border-radius: 14px;
  background: #363636;
}
.rate-knob {
  width: 64px;
  height: 64px;
  margin-left: 9px;
  border-radius: 50%;
  background: linear-gradient(#bbb, #bbb) 50% 0 / 1px 29px no-repeat, #232323;
}
.rate {
  display: flex;
  flex-direction: column;
  align-items: center;
  gap: 14px;
  margin: 0 0 6px 40px;
  font-size: 18px;
  line-height: 20px;
}
```
FILE: script.js
```js
const colors = {
  gray:   { soft: "#a8adad", hot: "#fdfdfd", text: "#ffffff" },
  red:    { soft: "#9c6262", hot: "#e53226", text: "#e4696b", num: "#f0dada" },
  orange: { soft: "#a08766", hot: "#e88634", text: "#e88634" },
  cyan:   { soft: "#86acab", hot: "#97fdfd", text: "#86f4f4" },
  green:  { soft: "#74ab69", hot: "#7cfd4c", text: "#7af94b" },
  yellow: { soft: "#a8ad6a", hot: "#ffff54", text: "#fdfd54" },
  pink:   { soft: "#9f7ca8", hot: "#e968f6", text: "#e968f6" }
};

function vars(c, selected) {
  const k = colors[c];
  const soft = selected ? "#9fbcbc" : k.soft;
  return `--soft:${soft};--hot:${k.hot};--text:${k.text}` + (k.num ? `;--num:${k.num}` : "");
}

function bars(m) {
  if (!m) return '<div class="bars"></div>';
  const peaks = m.length > 2 ? `<u style="bottom:${m[2]}px"></u><u style="bottom:${m[3]}px"></u>` : "";
  return `<div class="bars"><i style="height:${m[0]}px"></i><i style="height:${m[1]}px"></i>${peaks}</div>`;
}

// Mixer strips: name, color, dB, meter [left, right, peakL, peakR]
const strips = [
  ["CLICK", "gray", "-0.1", [74, 74, 116, 116]],
  ["GUIA", "gray", "-inf"],
  ["DRUMS", "red", "+0.0", [93, 92]],
  ["PERCUSSÃO", "red", "-9.8", [66, 53]],
  ["BASS", "orange", "-13.6", [83, 83, 90, 91]],
  ["SYNTH BASS", "orange", "-15.5", [85, 87, 87, 87]],
  ["GTR CLEAN", "cyan", "-inf"],
  ["GTR DRIVE", "cyan", "-15.3", [72, 86, 73, 90]],
  ["GTR DRONE", "cyan", "-inf"],
  ["GTR LEAD", "cyan", "-9.6", [88, 84, 95, 92]],
  ["GTR SMALL", "cyan", "-86.1"],
  ["GTR SWELL", "cyan", "-28.9", [28, 25, 38, 34]],
  ["PIANO", "green", "-14.1", [83, 82, 89, 90]],
  ["PADS", "green", "-22.3", [61, 66, 63, 74]],
  ["ARPEJADOR", "green", "-17.5", [75, 76, 80, 82]],
  ["BELLS", "green", "-inf"]
];

document.getElementById("strips").innerHTML = strips.map(([name, color, db, meter], i) => `
  <div class="strip${i === 9 ? " selected" : ""}" style="${vars(color, i === 9)}">
    <div class="strip-io">
      <label class="pill"><select aria-label="Input"><option>Input 1</option></select><svg width="32" height="32"><use href="#i-down"/></svg></label>
      <div class="io-row">
        <label class="pill"><select aria-label="Monitor"><option>in</option></select><svg width="32" height="32"><use href="#i-down"/></svg></label>
        <button class="infx">IN<br>FX</button>
      </div>
      <span class="knob"></span>
    </div>
    <div class="strip-mid">
      <div class="strip-meter"><div class="db">${db}</div>${bars(meter)}<svg width="16" height="28"><use href="#i-spk"/></svg></div>
      <div class="strip-fader">
        <input class="fader" type="range" min="0" max="100" value="100" aria-label="Volume ${name}">
        <button class="recbtn" aria-label="Arm ${name}"><svg width="40" height="40"><use href="#i-rec"/></svg></button>
      </div>
      <div>
        <button class="sq mute">M</button>
        <button class="sq solo">S</button>
        <button class="sq route" aria-label="Route"><svg width="36" height="36"><use href="#i-route"/></svg></button>
      </div>
    </div>
    <div class="strip-name">${name}</div>
    <div class="strip-num">${i + 1}</div>
  </div>`).join("");

// Master meter
let mm = `<span class="peak" style="left:16px;top:8px">+0.0</span><span class="peak" style="left:86px;top:8px">+0.0</span>
  <span class="side" style="left:0;bottom:38px"></span><span class="side" style="right:0;bottom:38px"></span>
  <span class="bar" style="left:35px;height:239px"></span><span class="bar" style="left:71px;height:231px"></span>
  <span class="bar" style="left:35px;bottom:291px;height:1px"></span><span class="bar" style="left:71px;bottom:291px;height:1px"></span>
  <span class="rms" style="left:14px;bottom:14px">RMS</span><span class="rms" style="left:88px;bottom:14px">-8.7</span>`;
[12, 6, 0, 6, 12, 18, 24, 30, 36, 42].forEach((n, i) => {
  const top = Math.round(29 + i * 24.6);
  const on = i > 1 ? " on" : "";
  mm += `<span class="ml${on}" style="top:${top}px">${n}${i > 1 ? "-" : ""}</span>`;
  mm += `<span class="mr${on}" style="top:${top}px">${i > 1 ? "-" : ""}${n}</span>`;
});
[6, 18, 30, 42, 54].forEach((n, i) => {
  mm += `<span class="mc" style="top:${45 + i * 50}px">-${n}-</span>`;
});
document.getElementById("masterMeter").innerHTML = mm;

document.getElementById("keys").innerHTML = "C Db D Eb E F Gb G Ab A Bb B".split(" ")
  .map(k => `<button class="btn">${k}</button>`).join("");

// Small seeded random so the waves are always the same
let seed = 7;
function rnd() {
  seed = (seed * 16807) % 2147483647;
  return seed / 2147483647;
}

// Song overview: [from, to, ampStart, ampEnd, chance of a short bar]
const SONG_W = 2994;
const PLAYED = 2000;
const sections = [
  [40, 44, 32, 32, 0], [47, 50, 1, 1, 0], [66, 102, 1, 10, 0],
  [106, 242, 85, 85, .2], [242, 526, 84, 84, .2], [526, 665, 87, 87, .2],
  [667, 906, 94, 94, .12], [906, 912, 98, 98, 0], [919, 976, 50, 26, 0],
  [979, 1121, 86, 88, .2], [1123, 1400, 94, 94, .12], [1400, 1650, 94, 94, .05],
  [1654, 1680, 38, 34, 0], [1681, 1822, 87, 87, .2], [1824, 2006, 95, 95, 0],
  [2010, 2490, 94, 94, .01], [2494, 2518, 46, 34, 0], [2520, 2770, 87, 87, .15],
  [2771, 2775, 52, 52, 0], [2778, 2892, 33, 1, 0]
];
let wave = "";
sections.forEach(([from, to, a, b, low]) => {
  for (let x = from; x < to; x += 6.6) {
    let h = a + (b - a) * (x - from) / (to - from);
    if (a > 60) h += rnd() * 6 - 4;
    if (rnd() < low) h = 48 + rnd() * 18;
    wave += `<rect x="${x.toFixed(1)}" y="${(100 - h).toFixed(1)}" width="3" height="${(h * 2).toFixed(1)}" fill="${x < PLAYED ? "#f2f2f2" : "#777"}"/>`;
  }
});

const W = "#ffffff", G = "#78fd4c", O = "#ee8850", C = "#a2fefe", B = "#3880f7", R = "#ea5148";
const marks = [
  [37, "Contagem", W, 1], [102, "Introdução", G], [241, "Verso", O, 1], [386, "Verso", O],
  [525, "Pré Refrão", C, 1], [664, "Refrão", B], [909, "Pausa", W, 1], [981, "Pré Refrão", C],
  [1120, "Refrão", B, 1], [1398, "Pós-refrão", C], [1649, "Pausa", W, 1], [1682, "Ponte", R],
  [1821, "Ponte", R, 1], [1960, "Refrão", B], [2244, "Pós-refrão", C, 1], [2489, "Pausa", W],
  [2522, "Ponte", R, 1], [2661, "Ponte", R], [2767, "Final", W, 1]
];
document.getElementById("song").innerHTML =
  `<svg viewBox="0 0 ${SONG_W} 200" preserveAspectRatio="none">${wave}</svg>` +
  marks.map(([x, t, c, low]) =>
    `<div class="mark ${low ? "low" : "up"}" style="left:${(x / SONG_W * 100).toFixed(3)}%;--c:${c}"><a href="#">${t}</a></div>`).join("");

// Track list; segs are [start, end, sparse] on the timeline
const choir = [[1327, 1529, 1], [1657, 2022, 1], [2153, 2626, 1]];
const tracks = [
  [8, "GTR DRIVE", "cyan", [40, 44], [[1319, 1529], [1645, 2056], [2155, 2657], [2846, 2860]]],
  [9, "GTR DRONE", "cyan", null, [[1010, 1054, 1], [1154, 1160, 2], [2669, 2829, 1]]],
  [10, "GTR LEAD", "cyan", [31, 28], [[1327, 1526, 1], [1653, 2052, 1], [2156, 2280], [2280, 2660, 1]]],
  [11, "GTR SMALL", "cyan", null, [[923, 1006, 1], [1050, 1057], [1072, 1084], [1099, 1141], [1149, 1191], [1199, 1214], [1225, 1316, 1], [1553, 1578], [1602, 1643, 1]]],
  [12, "GTR SWELL", "cyan", [9, 7, 12, 9], [[998, 1010], [1018, 1038], [1071, 1083], [1124, 1133], [1204, 1214], [1225, 1319, 1], [1549, 1563], [1578, 1641, 1], [2078, 2087], [2128, 2140], [2156, 2163], [2181, 2196], [2228, 2247], [2709, 2741, 1], [2761, 2790, 2], [2843, 2853]]],
  [13, "PIANO", "green", [27, 26, 29, 29], [[923, 1520], [1549, 2864]]],
  [14, "PADS", "green", [20, 21, 20, 24], [[917, 937, 2], [972, 986, 2], [1018, 1032, 2], [1055, 1067, 2], [1133, 1144, 2], [1179, 1190, 2], [1296, 2026, 2], [2242, 2247]], true],
  [15, "ARPEJADOR", "green", [24, 26, 25, 26], [[1327, 1514, 1], [1652, 2052, 1], [2213, 2645, 1]]],
  [16, "BELLS", "green", null, [[923, 930], [947, 1006, 1], [1156, 1167], [1274, 1308, 1], [1425, 1470, 1], [1489, 1512], [1526, 1536], [1602, 1638], [1753, 1797, 1], [2024, 2057], [2357, 2400], [2458, 2641], [2761, 2767], [2783, 2793], [2821, 2844]]],
  [17, "HAMMOND", "green", [25, 25, 27, 27], [[1323, 1514], [1650, 2050], [2156, 2258, 2], [2258, 2657], [2756, 2834, 2]]],
  [18, "CONTRALTO", "yellow", [25, 26], [...choir, [2733, 2759, 2]]],
  [19, "SOPRANO", "yellow", [27, 26, 27, 28], [...choir, [2063, 2124, 2], [2664, 2822, 2]]],
  [20, "TENOR", "yellow", [23, 24, 29, 27], [...choir, [2080, 2120, 2], [2700, 2822, 2]]],
  [21, "VOZ ENSAIO", "pink", "M", null]
];

document.getElementById("tcp").innerHTML = tracks.map(([n, name, color, meter]) => `
  <div class="track${n === 10 ? " selected" : ""}" style="${vars(color)}">
    <div class="t-num">${n}</div>
    <div class="t-name"><button class="t-rec" aria-label="Arm ${name}"><svg width="42" height="42"><use href="#i-rec"/></svg></button><span>${name}</span><span class="t-knob"></span></div>
    <div class="t-ms"><button class="mute${meter === "M" ? " muted" : ""}">M</button><button class="solo">S</button></div>
    <button class="t-fx"><span>FX</span><i><svg width="16" height="20"><use href="#i-power"/></svg></i></button>
    <button class="t-trim"><svg width="26" height="20"><use href="#i-env"/></svg>TRIM</button>
    <div class="t-meter">${meter === "M" ? "<em>M</em>" : bars(meter)}</div>
  </div>`).join("");

const X0 = 875, ITEM_W = 2061, LANE_W = 2114;

function channel(segs, y) {
  let out = `<rect x="0" y="${y}" width="${ITEM_W}" height="1"/>`;
  segs.forEach(([a, b, kind]) => {
    if (!kind) {
      out += `<rect x="${a - X0}" y="${y - 1}" width="${b - a}" height="3"/>`;
      return;
    }
    let x = a;
    while (x < b) {
      const len = kind === 1 ? 8 + rnd() * 30 : 2 + rnd() * 6;
      const gap = kind === 1 ? 1 + rnd() * 3 : 2 + rnd() * 8;
      out += `<rect x="${(x - X0).toFixed(1)}" y="${y - 1}" width="${Math.min(len, b - x).toFixed(1)}" height="3"/>`;
      x += len + gap;
    }
  });
  return out;
}

document.getElementById("lanes").innerHTML = tracks.map(([n, , color, , segs, lowOnly]) => {
  const style = segs ? vars(color) : "--hot:#453747";
  const body = segs ? channel(lowOnly ? segs.slice(0, 1) : segs, 8) + channel(segs, 24) : "";
  return `<div class="lane${n === 10 ? " selected" : ""}" style="${style}"><div class="item"><svg viewBox="0 0 ${ITEM_W} 34" preserveAspectRatio="none">${body}</svg></div></div>`;
}).join("");

// Grid + marker lines + cursors
const pct = x => ((x - X0) / LANE_W * 100).toFixed(3) + "%";
const vline = (x, c, w, extra = "") => `<line x1="${pct(x)}" x2="${pct(x)}" y1="0" y2="100%" stroke="${c}" stroke-width="${w}" ${extra}/>`;
let grid = "";
for (let i = 1; i < 84; i++) grid += vline(Math.round(X0 + i * 25.18) + .5, "#1c1c1c", 1, 'stroke-dasharray="5 4"');
[[875, W], [924, G], [1024, O], [1126, O], [1226, C], [1327, B], [1502, W], [1555, C], [1654, B], [1856, C],
 [2032, W], [2056, R], [2156, R], [2458, C], [2634, W], [2660, R], [2760, R], [2836, W], [2936, W]]
  .forEach(([x, c]) => grid += vline(x + .5, c, 1));
grid += vline(2259, "#4f9a88", 3) + vline(2285, "rgba(205,170,80,.6)", 4);
document.getElementById("grid").innerHTML = grid;
```
